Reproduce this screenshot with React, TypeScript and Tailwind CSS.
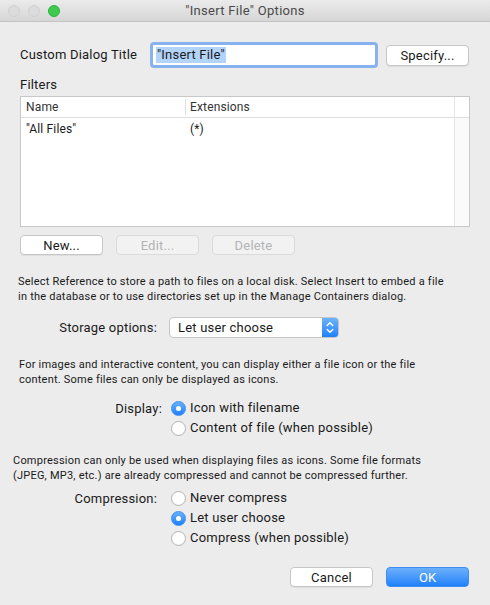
import React from "react";

const font = { fontFamily: "Roboto, 'Noto Sans', sans-serif" };

function TrafficLights() {
  return (
    <div className="absolute left-[8px] top-[5px] flex gap-[8px]">
      <span className="h-[12px] w-[12px] rounded-full border border-[#d0d0d0] bg-[#dcdcdc]" />
      <span className="h-[12px] w-[12px] rounded-full border border-[#d0d0d0] bg-[#dcdcdc]" />
      <span className="h-[12px] w-[12px] rounded-full border border-[#2eb33d] bg-[#3ec94f]" />
    </div>
  );
}

function PushButton({
  label,
  disabled = false,
  className = "",
}: {
  label: string;
  disabled?: boolean;
  className?: string;
}) {
  const look = disabled
    ? "border-[#dadada] bg-[#f2f2f2] text-[#b4b4b4]"
    : "border-[#c6c6c6] bg-white text-[#1a1a1a] shadow-[0_1px_0_rgba(0,0,0,0.06)]";
  return (
    <div
      className={`flex h-[20px] w-[83px] items-center justify-center rounded-[4px] border text-[13px] leading-none tracking-[0.2px] ${look} ${className}`}
    >
      {label}
    </div>
  );
}

function Radio({ checked, label }: { checked: boolean; label: string }) {
  return (
    <div className="flex h-[20px] items-center gap-[4px]">
      {checked ? (
        <span className="flex h-[15px] w-[15px] items-center justify-center rounded-full border border-[#3c8ef5] bg-gradient-to-b from-[#68b1fb] to-[#1c7ffa]">
          <span className="h-[5px] w-[5px] rounded-full bg-white" />
        </span>
      ) : (
        <span className="h-[15px] w-[15px] rounded-full border border-[#b3b3b3] bg-white shadow-[inset_0_-1px_1px_rgba(0,0,0,0.04)]" />
      )}
      <span className="text-[13px] tracking-[0.2px] text-[#1a1a1a]">{label}</span>
    </div>
  );
}

function PopupChevrons() {
  return (
    <svg width="8" height="13" viewBox="0 0 8 13" fill="none" stroke="white" strokeWidth="1.4" strokeLinecap="round" strokeLinejoin="round">
      <path d="M1.2 4.6 L4 1.8 L6.8 4.6" />
      <path d="M1.2 8.4 L4 11.2 L6.8 8.4" />
    </svg>
  );
}

export default function App() {
  return (
    <div className="relative h-[605px] w-[490px] overflow-hidden bg-[#ececec] text-[#1a1a1a]" style={font}>
      <header className="relative flex h-[22px] items-center justify-center border-b border-[#c4c4c4] bg-gradient-to-b from-[#ebebeb] to-[#d6d6d6]">
        <TrafficLights />
        <span className="text-[13px] tracking-[0.3px] text-[#4a4a4a]">"Insert File" Options</span>
      </header>

      <div className="flex flex-col px-[20px]">
        <div className="mt-[20px] flex h-[26px] items-center">
          <span className="w-[130px] text-[13px] tracking-[0.2px]">Custom Dialog Title</span>
          <div className="flex h-[26px] w-[228px] items-center rounded-[4px] border-[3px] border-[#86b3ef] bg-white px-[3px]">
            <span className="bg-[#b2d3fa] px-px text-[13px] leading-[16px] tracking-[0.2px]">"Insert File"</span>
          </div>
          <PushButton label="Specify..." className="ml-[8px] h-[21px]" />
        </div>

        <span className="mt-[9px] text-[13px] leading-[16px] tracking-[0.2px]">Filters</span>

        <div className="mt-[3px] flex h-[131px] border border-[#c8c8c8] bg-white">
          <div className="flex flex-1 flex-col">
            <div className="flex h-[21px] items-center border-b border-[#dedede] text-[12px] tracking-[0.15px] text-[#333]">
              <span className="w-[164px] pl-[5px]">Name</span>
              <span className="h-[16px] border-l border-[#dedede] pl-[4px] leading-[16px]">Extensions</span>
            </div>
            <div className="flex h-[21px] items-center text-[12px] tracking-[0.15px]">
              <span className="w-[164px] pl-[5px]">"All Files"</span>
              <span className="pl-[5px]">(*)</span>
            </div>
          </div>
          <div className="flex w-[15px] flex-col border-l border-[#e6e6e6] bg-[#fafafa]">
            <div className="h-[21px] border-b border-[#dedede] bg-white" />
          </div>
        </div>

        <div className="mt-[8px] flex gap-[13px]">
          <PushButton label="New..." />
          <PushButton label="Edit..." disabled />
          <PushButton label="Delete" disabled />
        </div>

        <p className="-ml-[2px] mt-[19px] text-[11px] leading-[15px] tracking-[0.22px]">
          Select Reference to store a path to files on a local disk. Select Insert to embed a file
          <br />
          in the database or to use directories set up in the Manage Containers dialog.
        </p>

        <div className="mt-[13px] flex h-[21px] items-center">
          <span className="w-[137px] text-right text-[13px] tracking-[0.2px]">Storage options:</span>
          <div className="ml-[12px] flex h-[21px] w-[170px] overflow-hidden rounded-[4px] border border-[#c6c6c6] bg-white">
            <span className="flex-1 pl-[8px] text-[13px] leading-[19px] tracking-[0.2px]">Let user choose</span>
            <span className="flex w-[16px] items-center justify-center bg-gradient-to-b from-[#6cb3fa] to-[#1a80fa]">
              <PopupChevrons />
            </span>
          </div>
        </div>

        <p className="-ml-[1px] mt-[19px] text-[11px] leading-[15px] tracking-[0.22px]">
          For images and interactive content, you can display either a file icon or the file
          <br />
          content. Some files can only be displayed as icons.
        </p>

        <div className="mt-[11px] flex">
          <span className="w-[142px] pt-[1px] text-right text-[13px] leading-[20px] tracking-[0.2px]">Display:</span>
          <div className="ml-[9px] flex flex-col">
            <Radio checked label="Icon with filename" />
            <Radio checked={false} label="Content of file (when possible)" />
          </div>
        </div>

        <p className="-ml-[7px] mt-[15px] text-[11px] leading-[15px] tracking-[0.22px]">
          Compression can only be used when displaying files as icons. Some file formats
          <br />
          (JPEG, MP3, etc.) are already compressed and cannot be compressed further.
        </p>

        <div className="mt-[5px] flex">
          <span className="w-[137px] pt-[1px] text-right text-[13px] leading-[20px] tracking-[0.2px]">Compression:</span>
          <div className="ml-[14px] flex flex-col">
            <Radio checked={false} label="Never compress" />
            <Radio checked label="Let user choose" />
            <Radio checked={false} label="Compress (when possible)" />
          </div>
        </div>

        <div className="mt-[19px] flex justify-end gap-[13px] pr-[1px]">
          <PushButton label="Cancel" className="w-[83px]" />
          <div className="flex h-[20px] w-[83px] items-center justify-center rounded-[4px] border border-[#3d8cf4] bg-gradient-to-b from-[#6bb0fa] to-[#1d80fa] text-[13px] leading-none text-white">
            OK
          </div>
        </div>
      </div>
    </div>
  );
}
